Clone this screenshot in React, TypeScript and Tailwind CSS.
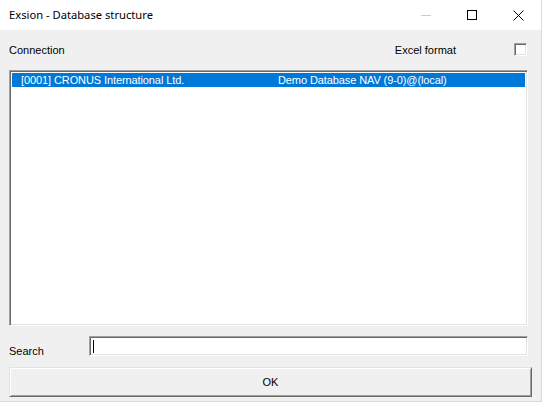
import React, { useState } from "react";

// Sunken 3D frame used by list boxes, text boxes and check boxes
const sunken =
  "border border-t-[#a0a0a0] border-l-[#a0a0a0] border-b-white border-r-white shadow-[inset_1px_1px_0_#696969,inset_-1px_-1px_0_#e3e3e3]";

// Raised frame of a classic push button
const raised =
  "border border-t-[#e3e3e3] border-l-[#e3e3e3] border-b-[#696969] border-r-[#696969] shadow-[inset_1px_1px_0_#ffffff,inset_-1px_-1px_0_#a0a0a0]";

interface Connection {
  id: string;
  company: string;
  database: string;
}

const connections: Connection[] = [
  {
    id: "0001",
    company: "CRONUS International Ltd.",
    database: "Demo Database NAV (9-0)@(local)",
  },
];

const TitleBar: React.FC<{ title: string }> = ({ title }) => (
  <div className="h-[30px] bg-white flex items-center shrink-0">
    <span
      className="pl-[9px] text-[11.2px] text-black flex-1"
      style={{ fontFamily: '"Noto Sans", "Open Sans", sans-serif' }}
    >
      {title}
    </span>
    <div className="flex h-full">
      {/* minimize (disabled) */}
      <div className="w-[46px] h-full flex items-center justify-center">
        <svg width="10" height="10" viewBox="0 0 10 10">
          <path d="M0 5.5H10" stroke="#cccccc" strokeWidth="1" />
        </svg>
      </div>
      {/* maximize */}
      <div className="w-[46px] h-full flex items-center justify-center">
        <svg width="10" height="10" viewBox="0 0 10 10">
          <rect x="0.5" y="0.5" width="9" height="9" fill="none" stroke="#000" strokeWidth="1" />
        </svg>
      </div>
      {/* close */}
      <div className="w-[46px] h-full flex items-center justify-center">
        <svg width="11" height="11" viewBox="0 0 11 11">
          <path d="M0.5 0.5L10.5 10.5M10.5 0.5L0.5 10.5" stroke="#000" strokeWidth="1" />
        </svg>
      </div>
    </div>
  </div>
);

export default function App() {
  const [excel, setExcel] = useState(false);
  const [search, setSearch] = useState("");
  const [selected, setSelected] = useState("0001");

  return (
    <div
      className="w-[542px] h-[402px] bg-[#f0f0f0] flex flex-col border-r border-b border-[#dadada] text-[11px] text-black"
      style={{ fontFamily: '"Liberation Sans", Arial, sans-serif' }}
    >
      <TitleBar title="Exsion - Database structure" />

      <div className="flex-1 flex flex-col pl-[9px] pr-[13px]">
        {/* Connection header */}
        <div className="h-[40px] flex items-center">
          <span className="pt-[1px]">Connection</span>
          <span className="ml-auto mr-[58px] pt-[1px]">Excel format</span>
          <button
            type="button"
            onClick={() => setExcel(!excel)}
            className={`w-[13px] h-[13px] bg-white mr-[1px] mb-[2px] flex items-center justify-center ${sunken}`}
          >
            {excel && (
              <svg width="9" height="9" viewBox="0 0 9 9">
                <path d="M1 4.5L3.5 7L8 1.5" stroke="#000" strokeWidth="1.5" fill="none" />
              </svg>
            )}
          </button>
        </div>

        {/* Connection list */}
        <div className={`w-[519px] h-[256px] bg-white p-[2px] ${sunken}`}>
          {connections.map((c) => (
            <div
              key={c.id}
              onClick={() => setSelected(c.id)}
              className={`h-[14px] flex items-center leading-none tracking-[-0.1px] ${
                selected === c.id ? "bg-[#0078d7] text-white" : ""
              }`}
            >
              <span className="pl-[9px] w-[266px]">
                [{c.id}] {c.company}
              </span>
              <span>{c.database}</span>
            </div>
          ))}
        </div>

        {/* Search row */}
        <div className="flex items-center mt-[10px] h-[20px]">
          <span className="w-[80px] pt-[10px]">Search</span>
          <div className={`w-[439px] h-[20px] bg-white flex items-center pl-[3px] ${sunken}`}>
            <span className="w-[1px] h-[13px] bg-black" />
            <input
              value={search}
              onChange={(e) => setSearch(e.target.value)}
              className="flex-1 h-full outline-none bg-transparent text-[11px] px-[1px]"
            />
          </div>
        </div>

        {/* OK button */}
        <button
          type="button"
          className={`mt-[11px] w-[523px] h-[30px] bg-[#f0f0f0] flex items-center justify-center ${raised}`}
        >
          OK
        </button>
      </div>
    </div>
  );
}
